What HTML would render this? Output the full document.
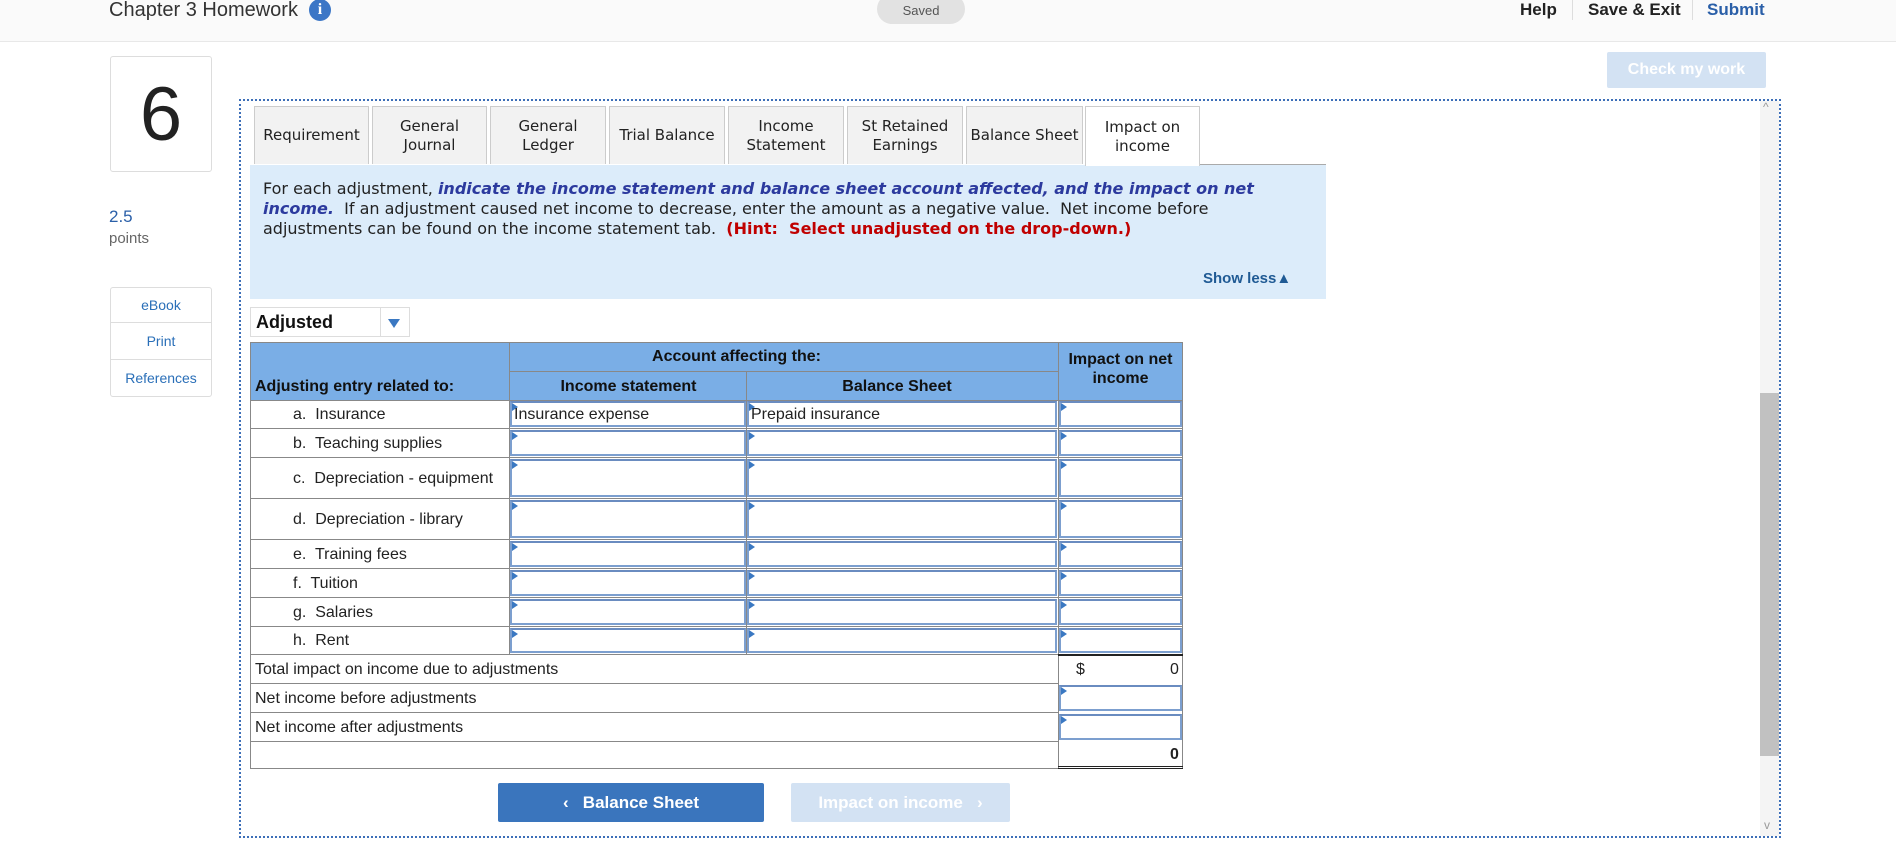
<!DOCTYPE html>
<html><head><meta charset="utf-8"><style>
*{box-sizing:border-box;margin:0;padding:0}
body{width:1896px;height:844px;position:relative;background:#fff;font-family:"Liberation Sans",Arial,sans-serif;overflow:hidden;color:#222}
.a{position:absolute}
.hdr{left:0;top:0;width:1896px;height:42px;background:#fafafa;border-bottom:1px solid #e8e8e8}
.tab{position:absolute;top:106px;height:58px;background:#f2f2f2;border:1px solid #ccc;border-bottom:none;font-family:"DejaVu Sans",sans-serif;font-size:15px;color:#222;display:flex;align-items:center;justify-content:center;text-align:center;line-height:19px}
.side{left:110px;width:102px;border:1px solid #ddd;background:#fff}
.tbl{left:250px;top:342px;width:933px;height:427px;border:1px solid #888}
.hl{position:absolute;background:#888;height:1px}
.vl{position:absolute;background:#888;width:1px}
.cell{position:absolute;font-size:16px;color:#222}
.inp{position:absolute;border:2px solid #7c9fcf;border-top-color:#6a8cc0;background:#fff}
.inp:before{content:"";position:absolute;left:0;top:0;border-left:6px solid #3a78c2;border-top:4px solid transparent;border-bottom:4px solid transparent}
.th{position:absolute;background:#7aaee6;font-weight:bold;font-size:16px;color:#111}
</style></head><body>
<div class="a hdr"></div>
<div class="a" style="left:109px;top:-1px;font-size:20px;color:#333">Chapter 3 Homework</div>
<div class="a" style="left:309px;top:-1px;width:22px;height:22px;border-radius:50%;background:#3b76c6;color:#fff;font-weight:bold;font-size:16px;text-align:center;line-height:22px;font-family:'Liberation Serif',serif">i</div>
<div class="a" style="left:877px;top:-6px;width:88px;height:30px;border-radius:15px;background:#e2e2e2;color:#555;font-size:13px;text-align:center;line-height:30px;padding-top:2px">Saved</div>
<div class="a" style="left:1520px;top:0px;font-size:17px;font-weight:bold;color:#222">Help</div>
<div class="a" style="left:1572px;top:0;width:1px;height:20px;background:#ddd"></div>
<div class="a" style="left:1588px;top:0px;font-size:17px;font-weight:bold;color:#222">Save &amp; Exit</div>
<div class="a" style="left:1692px;top:0;width:1px;height:20px;background:#ddd"></div>
<div class="a" style="left:1707px;top:0px;font-size:17px;font-weight:bold;color:#2a5fa8">Submit</div>
<div class="a" style="left:1607px;top:52px;width:159px;height:36px;background:#d3e2f3;color:#fff;font-weight:bold;font-size:16px;text-align:center;line-height:36px;border-radius:2px">Check my work</div>

<div class="a side" style="top:56px;height:116px;border-radius:3px;text-align:center;font-size:76px;line-height:116px;color:#222">6</div>
<div class="a" style="left:109px;top:207px;font-size:17px;color:#2a5fa8">2.5</div>
<div class="a" style="left:109px;top:230px;font-size:15px;color:#666">points</div>
<div class="a side" style="top:287px;height:110px;border-radius:3px"></div>
<div class="a" style="left:110px;top:287px;width:102px;height:36px;line-height:36px;text-align:center;font-size:14px;color:#2a6fb8;border-bottom:1px solid #ddd">eBook</div>
<div class="a" style="left:110px;top:323px;width:102px;height:37px;line-height:37px;text-align:center;font-size:14px;color:#2a6fb8;border-bottom:1px solid #ddd">Print</div>
<div class="a" style="left:110px;top:360px;width:102px;height:37px;line-height:37px;text-align:center;font-size:14px;color:#2a6fb8">References</div>

<div class="a" style="left:239px;top:99px;width:1542px;height:739px;border:2px dotted #3d6fb8"></div>
<div class="a" style="left:1760px;top:101px;width:19px;height:735px;background:#f4f4f4"></div>
<div class="a" style="left:1760px;top:393px;width:19px;height:363px;background:#c1c1c1"></div>
<div class="a" style="left:1763px;top:100px;font-size:12px;color:#999">^</div>
<div class="a" style="left:1764px;top:818px;font-size:12px;color:#999">v</div>

<div class="tab" style="left:254px;width:115px">Requirement</div>
<div class="tab" style="left:372px;width:115px">General<br>Journal</div>
<div class="tab" style="left:490px;width:116px">General<br>Ledger</div>
<div class="tab" style="left:609px;width:116px">Trial Balance</div>
<div class="tab" style="left:728px;width:116px">Income<br>Statement</div>
<div class="tab" style="left:847px;width:116px">St Retained<br>Earnings</div>
<div class="tab" style="left:966px;width:117px">Balance Sheet</div>
<div class="tab" style="left:1085px;width:115px;height:60px;background:#fff;z-index:2">Impact on<br>income</div>
<div class="a" style="left:1200px;top:164px;width:126px;height:1px;background:#aaa"></div>
<div class="a" style="left:250px;top:165px;width:1076px;height:134px;background:#dcecfa"></div>
<div class="a" style="left:263px;top:179px;width:1005px;font-family:'DejaVu Sans',sans-serif;font-size:16px;line-height:20px;color:#222">For each adjustment, <b><i style="color:#2c3a9e">indicate the income statement and balance sheet account affected, and the impact on net income.</i></b>&nbsp; If an adjustment caused net income to decrease, enter the amount as a negative value.&nbsp; Net income before adjustments can be found on the income statement tab.&nbsp; <b style="color:#c00000">(Hint:&nbsp; Select unadjusted on the drop-down.)</b></div>
<div class="a" style="left:1203px;top:270px;font-size:15px;font-weight:bold;color:#1f5a94">Show less&#9650;</div>

<div class="a" style="left:250px;top:307px;width:160px;height:30px;border:1px solid #ddd"></div>
<div class="a" style="left:380px;top:308px;width:1px;height:28px;background:#ddd"></div>
<div class="a" style="left:256px;top:312px;font-size:18px;font-weight:bold;color:#111">Adjusted</div>
<div class="a" style="left:388px;top:319px;border-top:9px solid #3a78c2;border-left:6px solid transparent;border-right:6px solid transparent"></div>

<div class="a tbl">
<div class="th" style="left:0;top:0;width:931px;height:57px"></div>
<div class="th" style="left:259px;top:0;width:453px;height:28px;text-align:center;line-height:28px">Account affecting the:</div>
<div class="th" style="left:0;top:28px;width:259px;height:29px;line-height:32px;padding-left:4px">Adjusting entry related to:</div>
<div class="th" style="left:259px;top:28px;width:237px;height:29px;line-height:32px;text-align:center">Income statement</div>
<div class="th" style="left:496px;top:28px;width:300px;height:29px;line-height:32px;text-align:center">Balance Sheet</div>
<div class="th" style="left:808px;top:7px;width:123px;text-align:center;line-height:19px">Impact on net income</div>
<div class="hl" style="left:259px;top:28px;width:549px"></div>
<div class="hl" style="left:0;top:57px;width:931px"></div>
<div class="vl" style="left:258px;top:0;height:312px"></div>
<div class="vl" style="left:495px;top:28px;height:284px"></div>
<div class="vl" style="left:807px;top:0;height:426px"></div>
</div>
<div id="rows"></div>
<script>
var r=[[399,428,"a.&nbsp; Insurance"],[428,457,"b.&nbsp; Teaching supplies"],[457,498,"c.&nbsp; Depreciation - equipment"],[498,539,"d.&nbsp; Depreciation - library"],[539,568,"e.&nbsp; Training fees"],[568,597,"f.&nbsp; Tuition"],[597,626,"g.&nbsp; Salaries"],[626,654,"h.&nbsp; Rent"]];
var h="";
r.forEach(function(x,i){
 var t=x[0],b=x[1],m=(t+b)/2;
 h+='<div class="cell" style="left:293px;top:'+(m-8)+'px">'+x[2]+'</div>';
 h+='<div class="hl" style="left:251px;top:'+b+'px;width:931px"></div>';
 var cols=[[510,236],[747,310],[1059,123]];
 cols.forEach(function(c,j){h+='<div class="inp" style="left:'+c[0]+'px;top:'+(t+2)+'px;width:'+c[1]+'px;height:'+(b-t-3)+'px"></div>';});
 if(i==0){h+='<div class="cell" style="left:514px;top:'+(m-8)+'px">Insurance expense</div><div class="cell" style="left:751px;top:'+(m-8)+'px">Prepaid insurance</div>';}
});
var s=[[654,683,"Total impact on income due to adjustments"],[683,712,"Net income before adjustments"],[712,741,"Net income after adjustments"]];
s.forEach(function(x,i){var m=(x[0]+x[1])/2;
 h+='<div class="cell" style="left:255px;top:'+(m-8)+'px">'+x[2]+'</div>';
 h+='<div class="hl" style="left:251px;top:'+x[1]+'px;width:807px"></div>';
 if(i>0)h+='<div class="inp" style="left:1059px;top:'+(x[0]+2)+'px;width:123px;height:26px"></div>';
});
h+='<div class="cell" style="left:1076px;top:661px">$</div><div class="cell" style="left:1170px;top:661px">0</div>';
h+='<div class="a" style="left:1058px;top:654px;width:125px;height:2px;background:#222"></div>';
h+='<div class="cell" style="left:1170px;top:746px;font-weight:bold">0</div>';
h+='<div class="a" style="left:1058px;top:766px;width:125px;height:3px;border-top:1px solid #222;border-bottom:1px solid #222"></div>';
document.getElementById("rows").innerHTML=h;
</script>
<div class="a" style="left:498px;top:783px;width:266px;height:39px;background:#3a75bd;color:#fff;font-weight:bold;font-size:17px;text-align:center;line-height:39px;border-radius:2px">&lsaquo;&nbsp;&nbsp; Balance Sheet</div>
<div class="a" style="left:791px;top:783px;width:219px;height:39px;background:#d3e2f3;color:#fff;font-weight:bold;font-size:17px;text-align:center;line-height:39px;border-radius:2px">Impact on income&nbsp;&nbsp; &rsaquo;</div>
</body></html>
